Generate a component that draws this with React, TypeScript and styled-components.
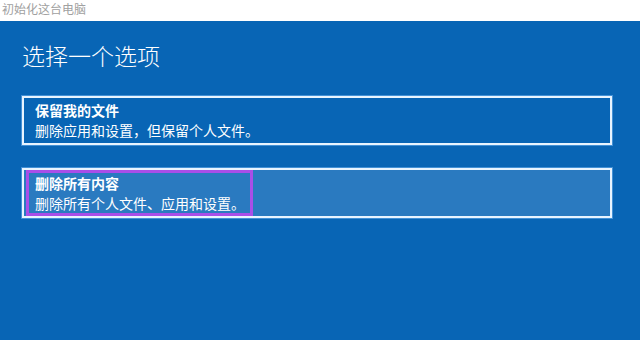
import styled, { createGlobalStyle } from 'styled-components';

const GlobalStyle = createGlobalStyle`
  html, body {
    margin: 0;
    padding: 0;
    height: 100%;
    background: #0865b5;
  }
  #root {
    height: 100%;
  }
`;

const Page = styled.div`
  width: 640px;
  height: 340px;
  display: flex;
  flex-direction: column;
  font-family: "Microsoft YaHei", "Noto Sans CJK SC", "Noto Sans", sans-serif;
  overflow: hidden;
`;

const TitleBar = styled.div`
  height: 21px;
  background: #ffffff;
  color: #a0a0a0;
  font-size: 12px;
  line-height: 17px;
  padding-left: 2px;
  flex-shrink: 0;
`;

const Main = styled.div`
  flex: 1;
  background: #0865b5;
  padding: 0 28px 0 22px;
  display: flex;
  flex-direction: column;
`;

const Heading = styled.h1`
  margin: 17px 0 24px;
  font-size: 23px;
  line-height: 34px;
  font-weight: 300;
  color: #ffffff;
`;

const Options = styled.div`
  display: flex;
  flex-direction: column;
  gap: 23px;
`;

const Option = styled.div<{ $selected?: boolean }>`
  border: 2px solid #e8f4ff;
  box-shadow: 0 0 0 1px rgba(140, 200, 255, 0.45);
  background: ${(p) => (p.$selected ? '#2a7ac0' : 'transparent')};
  padding: ${(p) => (p.$selected ? '0 0 0 2px' : '2px 11px 3px')};
  color: #ffffff;
  font-size: 14px;
  line-height: 20px;
`;

const Highlight = styled.div`
  display: inline-block;
  border: 3px solid #a94ee8;
  padding: 0 5px 0 6px;
`;

const OptionTitle = styled.div`
  font-weight: bold;
`;

const OptionDesc = styled.div``;

export default function App() {
  return (
    <>
      <GlobalStyle />
      <Page>
        <TitleBar>初始化这台电脑</TitleBar>
        <Main>
          <Heading>选择一个选项</Heading>
          <Options>
            <Option>
              <OptionTitle>保留我的文件</OptionTitle>
              <OptionDesc>删除应用和设置，但保留个人文件。</OptionDesc>
            </Option>
            <Option $selected>
              <Highlight>
                <OptionTitle>删除所有内容</OptionTitle>
                <OptionDesc>删除所有个人文件、应用和设置。</OptionDesc>
              </Highlight>
            </Option>
          </Options>
        </Main>
      </Page>
    </>
  );
}
